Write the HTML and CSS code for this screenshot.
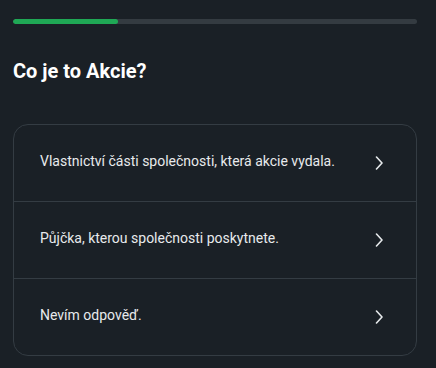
FILE: index.html
```html
<!DOCTYPE html>
<html lang="cs">
<head>
<meta charset="utf-8">
<link rel="stylesheet" href="styles.css">
</head>
<body>
<div class="page">
  <div class="progress"><div class="progress-fill"></div></div>
  <h1 class="title">Co je to Akcie?</h1>
  <div class="card">
    <div class="option">
      <span class="option-text">Vlastnictví části společnosti, která akcie vydala.</span>
      <svg class="chev" width="10" height="14" viewBox="0 0 10 14"><path d="M2.5 1 L8 7 L2.5 13" fill="none" stroke="#e6e9eb" stroke-width="1.6" stroke-linecap="round" stroke-linejoin="round"/></svg>
    </div>
    <div class="option">
      <span class="option-text">Půjčka, kterou společnosti poskytnete.</span>
      <svg class="chev" width="10" height="14" viewBox="0 0 10 14"><path d="M2.5 1 L8 7 L2.5 13" fill="none" stroke="#e6e9eb" stroke-width="1.6" stroke-linecap="round" stroke-linejoin="round"/></svg>
    </div>
    <div class="option">
      <span class="option-text">Nevím odpověď.</span>
      <svg class="chev" width="10" height="14" viewBox="0 0 10 14"><path d="M2.5 1 L8 7 L2.5 13" fill="none" stroke="#e6e9eb" stroke-width="1.6" stroke-linecap="round" stroke-linejoin="round"/></svg>
    </div>
  </div>
</div>
</body>
</html>
```
FILE: styles.css
```css
html, body {
  margin: 0;
  padding: 0;
  background: #1a2026;
}
body {
  font-family: Roboto, "Liberation Sans", sans-serif;
  color: #e8eaec;
}
.page {
  padding: 19px 19px 0 13px;
  display: flex;
  flex-direction: column;
}
.progress {
  height: 5px;
  border-radius: 3px;
  background: #343b41;
  overflow: hidden;
}
.progress-fill {
  width: 105px;
  height: 100%;
  background: #1fa855;
  border-radius: 3px;
}
.title {
  margin: 35px 0 0 0;
  font-size: 20px;
  line-height: 24px;
  font-weight: 700;
  color: #ffffff;
}
.card {
  margin-top: 41px;
  border: 1px solid #343c43;
  border-radius: 15px;
  display: flex;
  flex-direction: column;
}
.option {
  height: 76px;
  display: flex;
  align-items: center;
  justify-content: space-between;
  padding: 0 32px 0 26px;
  border-top: 1px solid #343c43;
}
.option:first-child {
  border-top: none;
}
.option-text {
  font-size: 14px;
  line-height: 18px;
  color: #e8eaec;
  margin-bottom: 4px;
}
.chev {
  display: block;
}
```
